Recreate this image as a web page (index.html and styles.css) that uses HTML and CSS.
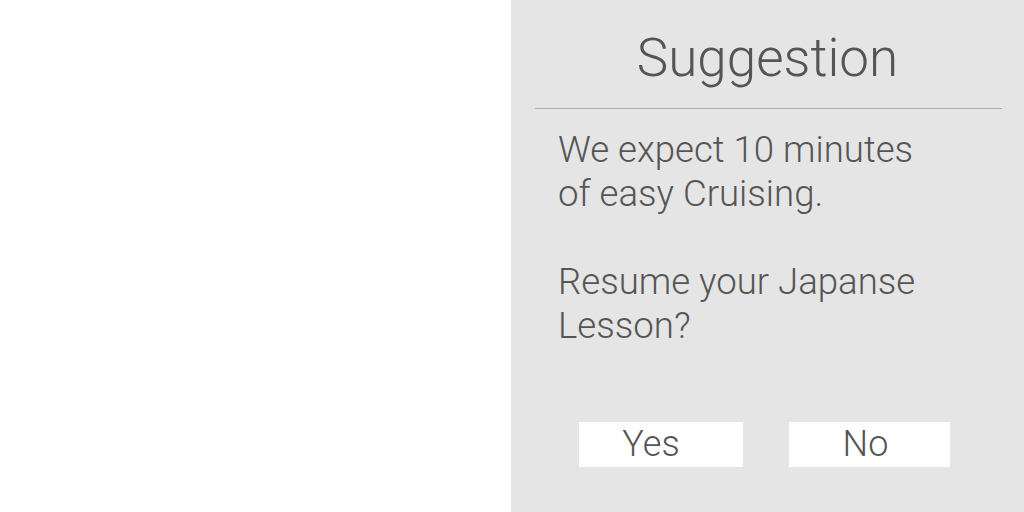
FILE: index.html
```html
<!DOCTYPE html>
<html>
<head>
<meta charset="utf-8">
<link rel="stylesheet" href="styles.css">
</head>
<body>
<div class="page">
  <div class="blank"></div>
  <div class="panel">
    <h1 class="title">Suggestion</h1>
    <div class="divider"></div>
    <div class="message">
      <p>We expect 10 minutes<br>of easy Cruising.</p>
      <p>Resume your Japanse<br>Lesson?</p>
    </div>
    <div class="actions">
      <button class="btn btn-yes">Yes</button>
      <button class="btn btn-no">No</button>
    </div>
  </div>
</div>
</body>
</html>
```

FILE: styles.css
```css
html, body {
  margin: 0;
  padding: 0;
  background: #ffffff;
}
.page {
  display: flex;
  width: 1024px;
  height: 512px;
  font-family: Roboto, "Liberation Sans", sans-serif;
  font-weight: 300;
  color: #555555;
}
.blank {
  flex: 0 0 511px;
  background: #ffffff;
}
.panel {
  flex: 1;
  background: #e5e5e5;
  display: flex;
  flex-direction: column;
}
.title {
  margin: 0;
  height: 108px;
  box-sizing: border-box;
  padding-top: 26px;
  font-size: 53px;
  font-weight: 300;
  line-height: 64px;
  text-align: center;
}
.divider {
  height: 1px;
  background: #b0b0b0;
  margin: 0 22px 0 24px;
}
.message {
  padding: 19px 0 0 47px;
  font-size: 36.6px;
  line-height: 44px;
  height: 313px;
  box-sizing: border-box;
}
.message p {
  margin: 0 0 44px 0;
}
.actions {
  display: flex;
  gap: 46px;
  padding-left: 68px;
}
.btn {
  border: none;
  background: #ffffff;
  height: 45px;
  padding: 0;
  font-family: inherit;
  font-weight: 300;
  font-size: 36px;
  color: #555555;
  line-height: 45px;
}
.btn-yes { width: 164px; padding-right: 20px; }
.btn-no { width: 161px; padding-right: 8px; }
```
